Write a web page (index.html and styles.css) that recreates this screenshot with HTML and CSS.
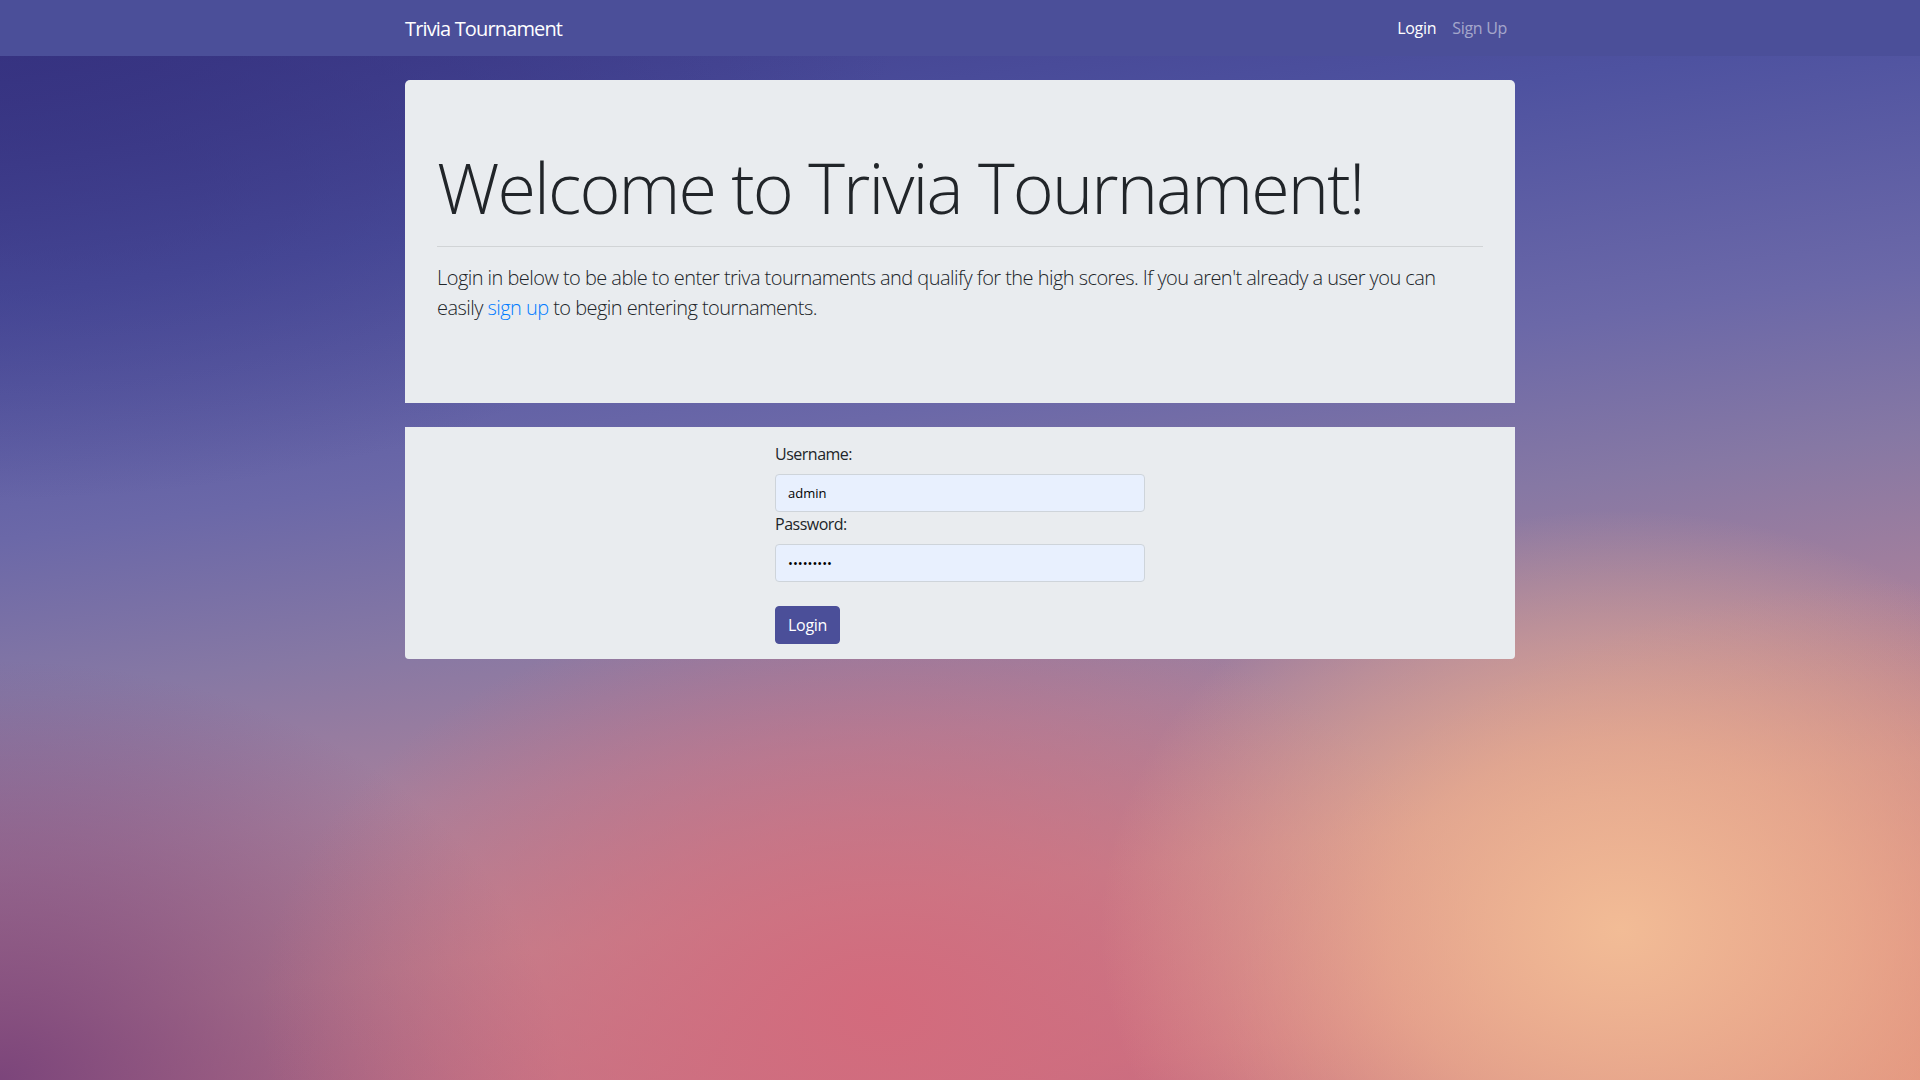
FILE: index.html
```html
<!DOCTYPE html>
<html lang="en">
<head>
<meta charset="utf-8">
<title>Trivia Tournament</title>
<link rel="stylesheet" href="styles.css">
</head>
<body>
<nav class="navbar">
  <div class="nav-inner">
    <a class="brand" href="#">Trivia Tournament</a>
    <ul class="nav-links">
      <li><a class="nav-link active" href="#">Login</a></li>
      <li><a class="nav-link" href="#">Sign Up</a></li>
    </ul>
  </div>
</nav>
<main class="container">
  <section class="jumbotron">
    <h1 class="display">Welcome to Trivia Tournament!</h1>
    <hr class="divider">
    <p class="lead">Login in below to be able to enter triva tournaments and qualify for the high scores. If you aren't already a user you can easily <a href="#" class="link">sign up</a> to begin entering tournaments.</p>
  </section>
  <section class="login-card">
    <form class="login-form">
      <label class="field-label" for="username">Username:</label>
      <input class="field-input" id="username" type="text" value="admin">
      <label class="field-label" for="password">Password:</label>
      <input class="field-input" id="password" type="password" value="123456789">
      <button class="btn-login" type="button">Login</button>
    </form>
  </section>
</main>
</body>
</html>
```
FILE: styles.css
```css
* { box-sizing: border-box; }
html, body { margin: 0; padding: 0; }
body {
  min-height: 1080px;
  font-family: "Open Sans", "Noto Sans", sans-serif;
  font-size: 16px;
  line-height: 1.5;
  color: #212529;
  background:
    radial-gradient(ellipse 520px 420px at 1620px 930px, rgba(242,188,150,1) 0%, rgba(240,180,145,0.7) 45%, rgba(240,180,145,0) 100%),
    radial-gradient(ellipse 620px 420px at 880px 1010px, rgba(212,106,124,0.95) 0%, rgba(212,110,126,0.6) 45%, rgba(212,110,126,0) 100%),
    radial-gradient(ellipse 560px 420px at 0px 1080px, rgba(120,66,122,0.95) 0%, rgba(120,66,122,0) 100%),
    radial-gradient(ellipse 700px 500px at 1920px 1080px, rgba(226,140,118,0.9) 0%, rgba(226,140,118,0) 100%),
    radial-gradient(ellipse 900px 500px at 0px 0px, rgba(52,48,126,0.9) 0%, rgba(52,48,126,0) 100%),
    linear-gradient(172deg, #3c3987 0%, #4e52a0 22%, #6b68a8 40%, #8678a4 52%, #a6809c 64%, #bd8490 76%, #c27084 90%, #b05c7a 100%);
}
.navbar {
  height: 56px;
  background: #4b4f99;
  padding: 8px 0;
}
.nav-inner {
  width: 1140px;
  margin: 0 auto;
  padding: 0 15px;
  display: flex;
  align-items: center;
  justify-content: space-between;
  height: 40px;
}
.brand {
  color: #fff;
  font-size: 20px;
  line-height: 30px;
  letter-spacing: -0.85px;
  text-decoration: none;
  padding-top: 2px;
}
.nav-links {
  list-style: none;
  margin: 0;
  padding: 0;
  display: flex;
}
.nav-link {
  display: block;
  padding: 8px;
  color: rgba(255,255,255,0.5);
  text-decoration: none;
  font-size: 16px;
  line-height: 24px;
  letter-spacing: -0.3px;
}
.nav-link.active { color: #fff; }
.container {
  width: 1140px;
  margin: 0 auto;
  padding: 24px 15px 0;
}
.jumbotron {
  background: #e9ecef;
  border-radius: 5px 5px 0 0;
  padding: 64px 32px;
  margin-bottom: 24px;
}
.display {
  font-size: 70px;
  font-weight: 300;
  line-height: 86px;
  margin: 0 0 8px;
  letter-spacing: -1.9px;
}
.divider {
  border: 0;
  border-top: 1px solid rgba(0,0,0,0.1);
  margin: 16px 0;
}
.lead {
  font-size: 20px;
  font-weight: 300;
  line-height: 30px;
  margin: 0 0 16px;
  letter-spacing: -0.55px;
  padding-right: 20px;
}
.link { color: #007bff; text-decoration: none; }
.login-card {
  background: #e9ecef;
  border-radius: 0 0 4px 4px;
  padding: 15px 0 15px;
}
.login-form {
  width: 370px;
  margin: 0 auto;
  display: flex;
  flex-direction: column;
  align-items: flex-start;
}
.field-label {
  font-size: 16px;
  line-height: 24px;
  margin-bottom: 8px;
  letter-spacing: -0.5px;
}
.field-input {
  width: 100%;
  height: 38px;
  padding: 6px 12px;
  border: 1px solid #ced4da;
  border-radius: 4px;
  background: #e8f0fe;
  color: #000;
  font-family: "Open Sans", sans-serif;
  font-size: 13px;
}
.btn-login {
  margin-top: 24px;
  height: 38px;
  padding: 6px 12px;
  border: 1px solid #4b4f99;
  border-radius: 4px;
  background: #4b4f99;
  color: #fff;
  font-family: "Open Sans", sans-serif;
  font-size: 16px;
  line-height: 24px;
  letter-spacing: -0.3px;
}
```
